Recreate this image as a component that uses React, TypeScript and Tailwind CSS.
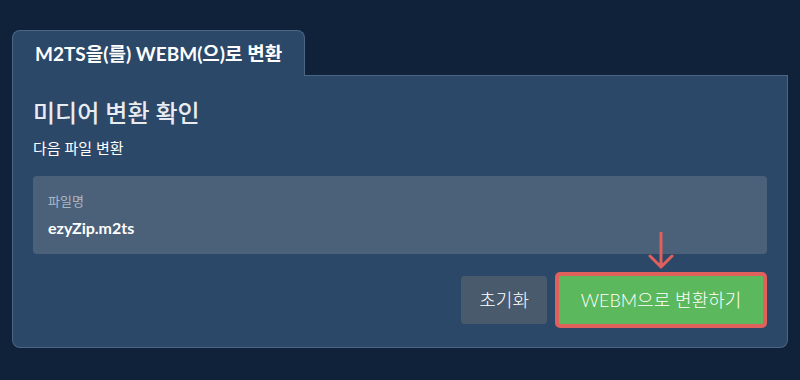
import React from 'react';

const font = { fontFamily: "Lato, 'Noto Sans CJK KR', 'Noto Sans', sans-serif" };

const DownArrow = () => (
  <svg width="28" height="38" viewBox="0 0 28 38" className="absolute left-1/2 -translate-x-1/2 -top-[40px]">
    <path d="M14 1 V35 M3 24 L14 35 L25 24" fill="none" stroke="#e0605c" strokeWidth="3" strokeLinecap="round" strokeLinejoin="round" />
  </svg>
);

export default function App() {
  return (
    <div className="w-[800px] h-[380px] bg-[#10223a] pt-[30px] px-[12px]" style={font}>
      <div className="w-[776px] flex flex-col">
        <div className="flex">
          <div className="h-[46px] px-[22px] flex items-center bg-[#2c4868] border border-b-0 border-[#4c6585] rounded-t-lg">
            <span className="text-white font-bold text-[19px] leading-none">M2TS을(를) WEBM(으)로 변환</span>
          </div>
          <div className="flex-1 border-b border-[#4c6585]" />
        </div>
        <div className="bg-[#2c4868] border border-t-0 border-[#4c6585] rounded-b-lg px-[20px] pt-[21px] pb-[19px]">
          <h1 className="text-[24px] leading-[32px] text-[#e8ecf0] font-medium">미디어 변환 확인</h1>
          <p className="mt-[9px] text-[15px] leading-[20px] text-white">다음 파일 변환</p>
          <div className="mt-[18px] h-[78px] bg-[#4b6179] rounded-[4px] px-[15px] pt-[16px]">
            <div className="text-[13px] leading-[18px] text-[#a9b6c6]">파일명</div>
            <div className="mt-[8px] text-[16px] leading-[20px] text-white font-bold">ezyZip.m2ts</div>
          </div>
          <div className="mt-[18px] flex justify-end items-center gap-[8px]">
            <button className="h-[48px] px-[18px] bg-[#4a5a6d] rounded-[4px] text-white text-[18px] font-light">초기화</button>
            <div className="relative">
              <DownArrow />
              <button className="h-[56px] w-[212px] bg-[#5cb85c] border-[4px] border-[#e0605c] rounded-[5px] text-white text-[18px] font-light">WEBM으로 변환하기</button>
            </div>
          </div>
        </div>
      </div>
    </div>
  );
}
